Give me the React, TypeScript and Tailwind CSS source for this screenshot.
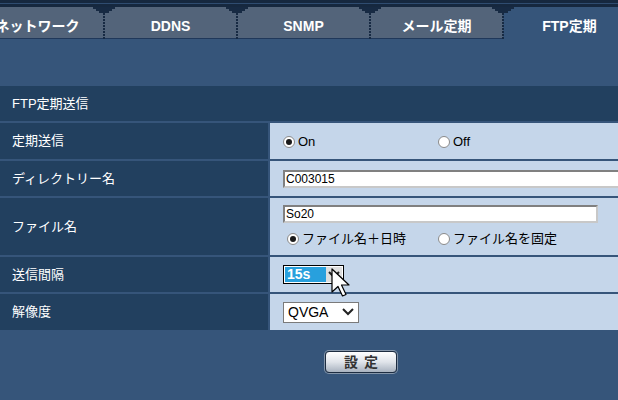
import React from "react";

const font = "font-['Liberation_Sans','Noto_Sans_CJK_JP',sans-serif]";

const tabs = [
  { label: "ネットワーク", active: false },
  { label: "DDNS", active: false },
  { label: "SNMP", active: false },
  { label: "メール定期", active: false },
  { label: "FTP定期", active: true },
];

function Divider() {
  return (
    <svg className="absolute -right-[11px] top-0 z-10" width="22" height="32" viewBox="0 0 22 32">
      <rect x="0" y="0" width="22" height="2" fill="#172a43" />
      <rect x="3" y="2" width="16" height="2" fill="#172a43" />
      <rect x="6" y="4" width="10" height="2" fill="#172a43" />
      {[6, 9, 12, 15, 18, 21, 24, 27, 30].map((y) => (
        <rect key={y} x="10" y={y} width="2" height="2" fill="#172a43" />
      ))}
    </svg>
  );
}

function Radio({ checked, label }: { checked: boolean; label: string }) {
  return (
    <label className="flex items-center gap-[3px] text-[13px] text-black">
      <span className="w-[12px] h-[12px] rounded-full bg-white border border-[#8a8a8a] flex items-center justify-center">
        {checked && <span className="w-[6px] h-[6px] rounded-full bg-[#1a1a1a]" />}
      </span>
      {label}
    </label>
  );
}

function TextBox({ value, width }: { value: string; width: string }) {
  return (
    <div
      className={`${width} h-[18px] bg-white border-2 border-t-[#808080] border-l-[#808080] border-b-[#c8c8c8] border-r-[#c8c8c8] text-[12px] leading-[14px] px-[1px] text-black`}
    >
      {value}
    </div>
  );
}

function Chevron() {
  return (
    <svg width="12" height="8" viewBox="0 0 12 8">
      <path d="M1 1 L6 6 L11 1" stroke="#222" strokeWidth="2" fill="none" />
    </svg>
  );
}

function Cursor() {
  return (
    <svg className="absolute left-[48px] top-[3px] z-20" width="22" height="32" viewBox="0 0 22 32">
      <path
        d="M1 1 L1 24 L7 18.5 L11.5 28 L15 26.5 L10.5 17 L18 17 Z"
        fill="#fff"
        stroke="#000"
        strokeWidth="1.2"
        strokeLinejoin="round"
      />
    </svg>
  );
}

function Row({ label, height, children }: { label: string; height: string; children: React.ReactNode }) {
  return (
    <>
      <div className={`${height} bg-[#22405f] text-white text-[13px] pl-[12px] flex items-center`}>{label}</div>
      <div className={`${height} bg-[#c5d6ea] pl-[13px] flex items-center`}>{children}</div>
    </>
  );
}

export default function App() {
  return (
    <div className={`${font} w-[618px] h-[400px] bg-[#36557a] overflow-hidden`}>
      {/* top bars */}
      <div className="h-[3px] bg-[#16283f]" />
      <div className="h-[1px] bg-[#2f4c70]" />
      <div className="h-[3px] bg-[#16283f]" />

      {/* tabs */}
      <div className="flex h-[32px] -ml-[29px]">
        {tabs.map((t, i) => (
          <div
            key={t.label}
            className={`relative w-[133px] shrink-0 flex items-center justify-center pt-[7px] text-[14px] font-bold text-white ${
              t.active ? "bg-[#36557a]" : "bg-[#53647a] border-b-[1px] border-[#20385a]"
            }`}
          >
            {t.label}
            {i < tabs.length - 1 && <Divider />}
          </div>
        ))}
      </div>

      <div className="h-[47px]" />

      {/* settings table */}
      <div className="grid grid-cols-[268px_1fr] gap-[2px]">
        <div className="col-span-2 h-[35px] bg-[#22405f] text-white text-[13px] pl-[12px] flex items-center">
          FTP定期送信
        </div>

        <Row label="定期送信" height="h-[36px]">
          <div className="flex items-center pt-[1px]">
            <div className="w-[155px]">
              <Radio checked label="On" />
            </div>
            <Radio checked={false} label="Off" />
          </div>
        </Row>

        <Row label="ディレクトリー名" height="h-[35px]">
          <TextBox value="C003015" width="w-[340px]" />
        </Row>

        <Row label="ファイル名" height="h-[57px]">
          <div className="flex flex-col gap-[6px]">
            <TextBox value="So20" width="w-[315px]" />
            <div className="flex items-center pl-[4px]">
              <div className="w-[151px]">
                <Radio checked label="ファイル名＋日時" />
              </div>
              <Radio checked={false} label="ファイル名を固定" />
            </div>
          </div>
        </Row>

        <Row label="送信間隔" height="h-[35px]">
          <div className="relative">
            <div className="w-[61px] h-[19px] border border-black bg-white flex items-stretch p-[1px]">
              <div className="w-[41px] bg-[#28a0dd] text-white text-[14px] font-bold leading-[15px] pl-[2px]">15s</div>
              <div className="flex-1 bg-[#dedede] flex items-center justify-center">
                <Chevron />
              </div>
            </div>
            <Cursor />
          </div>
        </Row>

        <Row label="解像度" height="h-[36px]">
          <div className="w-[76px] h-[21px] border border-[#7a7a7a] bg-white flex items-center justify-between pl-[4px] pr-[4px] text-[14px] text-black">
            QVGA
            <Chevron />
          </div>
        </Row>
      </div>

      {/* submit */}
      <div className="flex pt-[21px] pl-[325px]">
        <button className="w-[72px] h-[22px] rounded-[4px] border border-[#1d2c40] bg-gradient-to-b from-[#ffffff] via-[#e0e4ea] to-[#a8b2bf] text-[14px] font-bold text-[#333] tracking-[6px] pl-[6px] leading-none shadow-[0_0_0_1px_#8596aa]">
          設定
        </button>
      </div>
    </div>
  );
}
